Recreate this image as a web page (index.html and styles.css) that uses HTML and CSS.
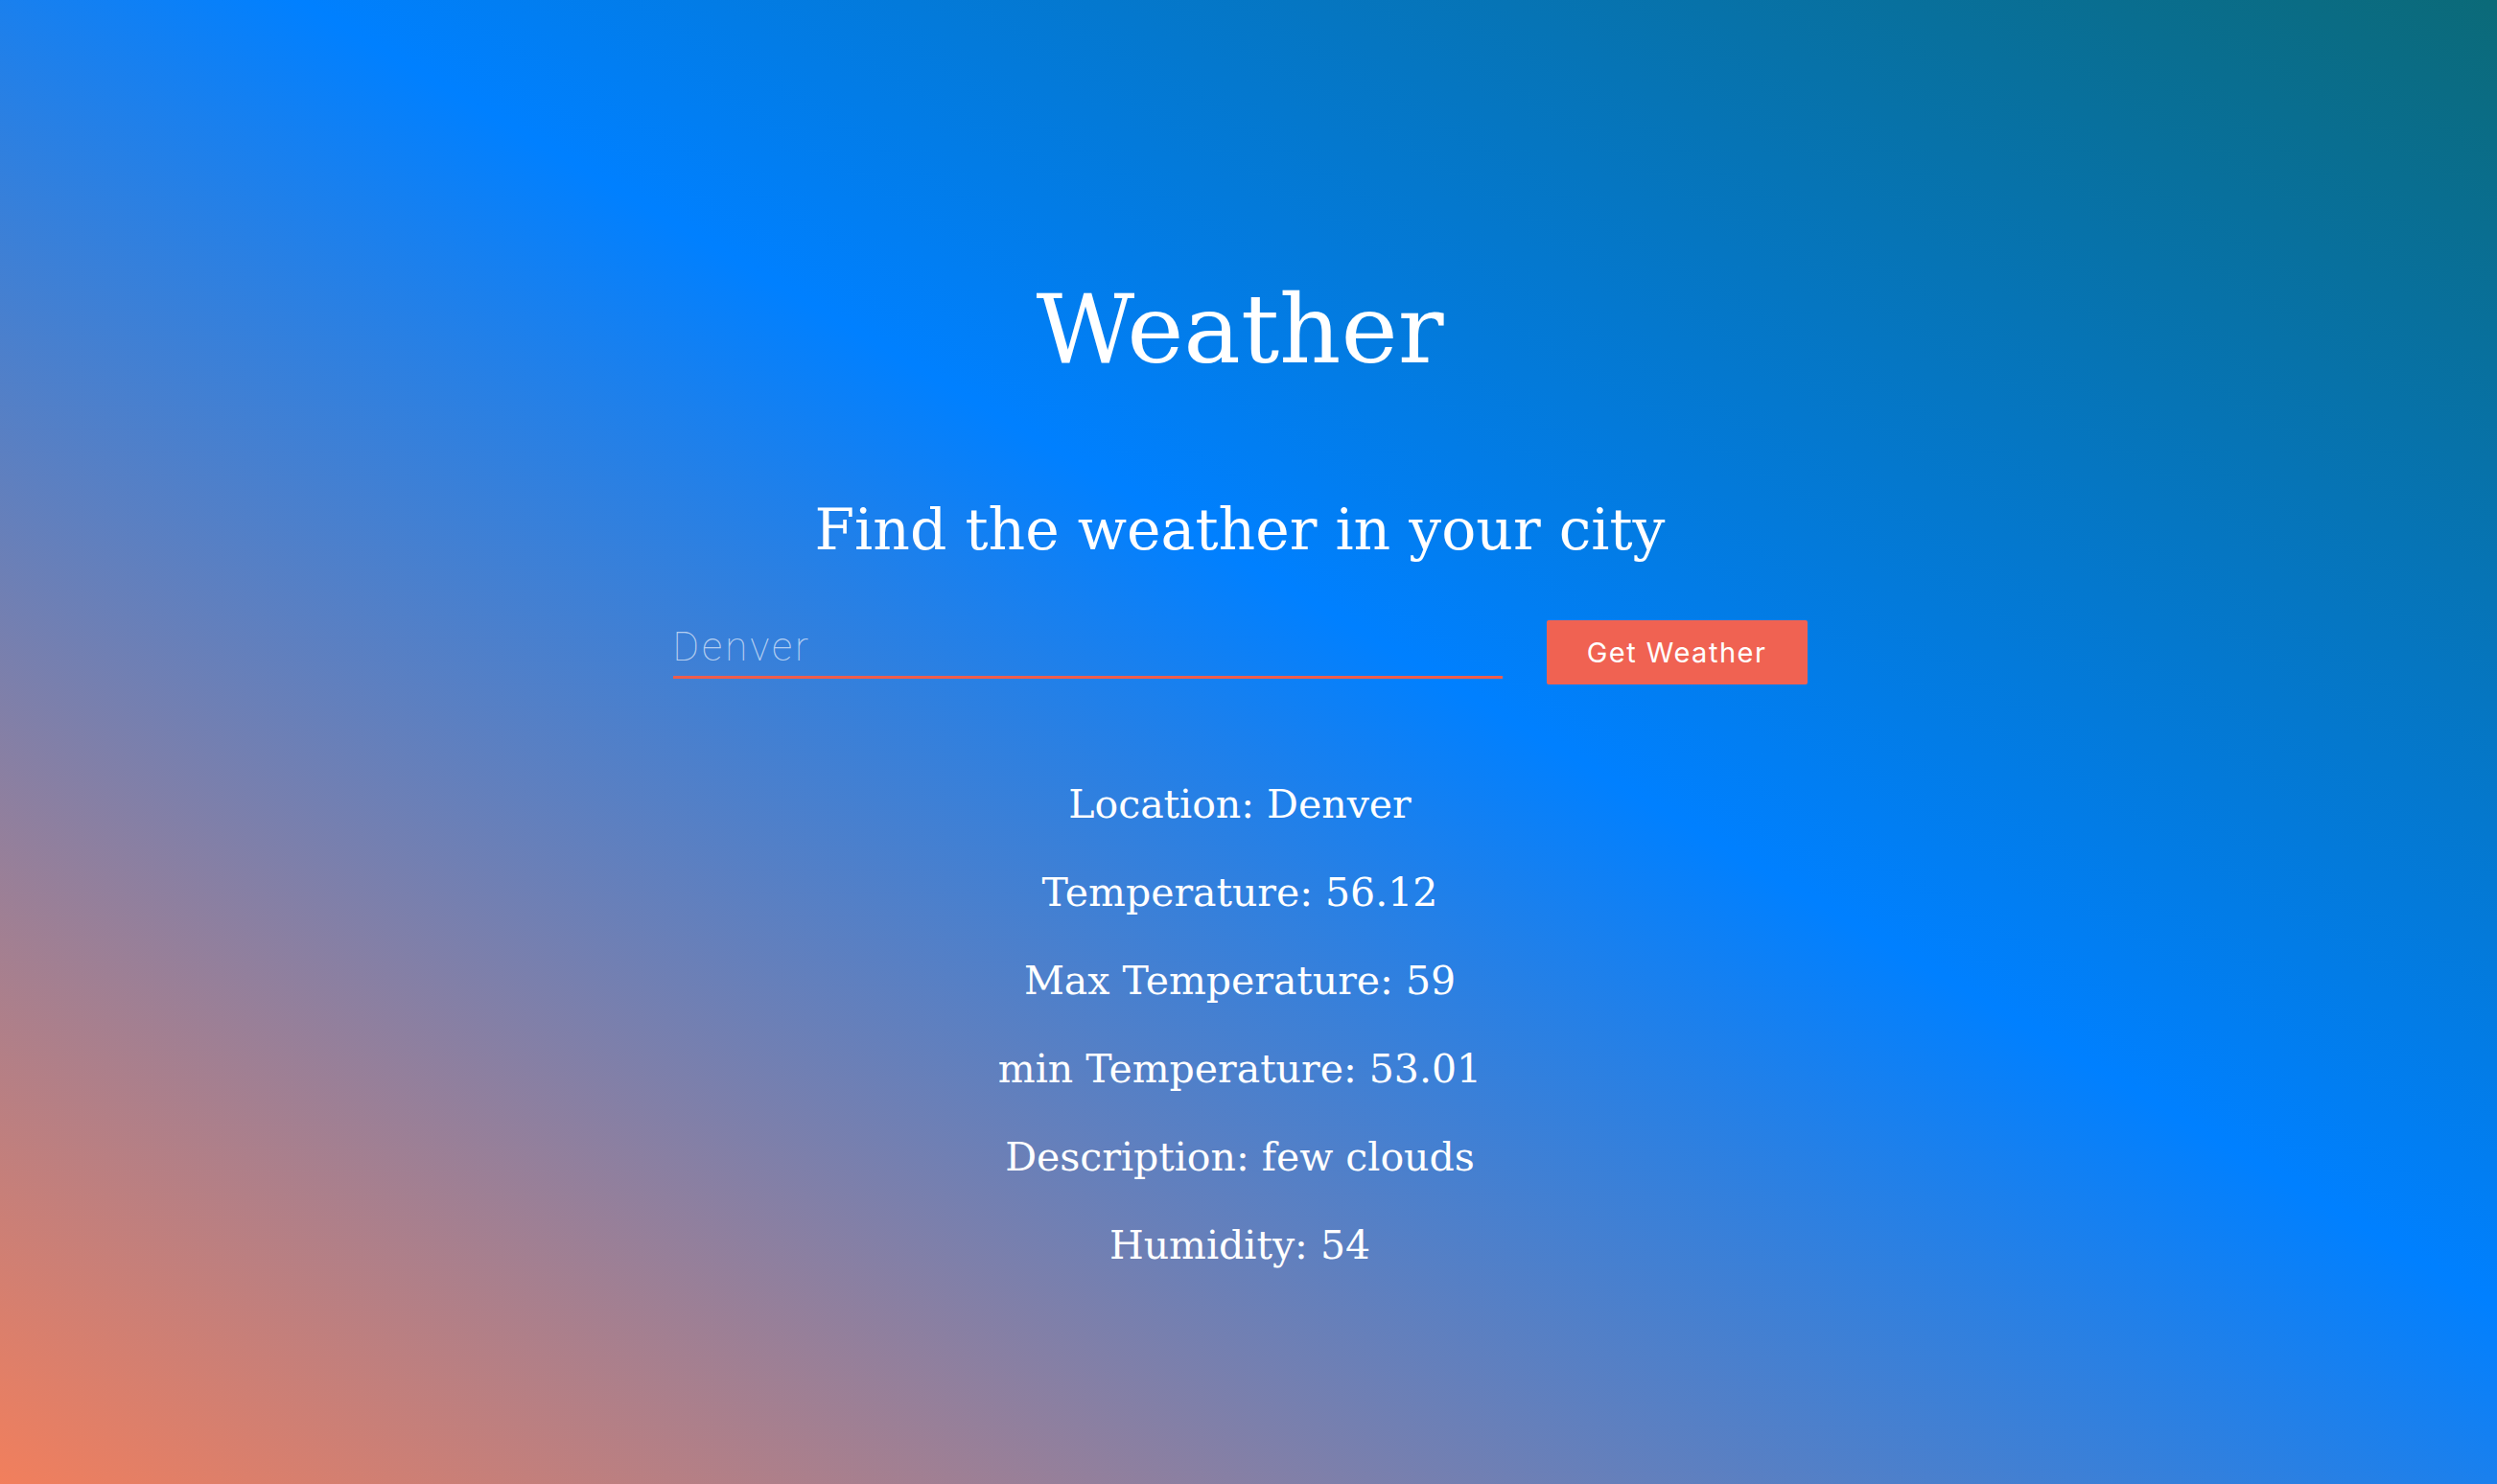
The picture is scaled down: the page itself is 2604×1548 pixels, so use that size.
FILE: index.html
```html
<!DOCTYPE html>
<html lang="en">
<head>
<meta charset="utf-8">
<title>Weather</title>
<link rel="stylesheet" href="styles.css">
</head>
<body>
<main class="app">
  <h1 class="title">Weather</h1>
  <h2 class="subtitle">Find the weather in your city</h2>
  <form class="search">
    <input class="search-input" type="text" placeholder="Denver">
    <button class="search-btn" type="button">Get Weather</button>
  </form>
  <section class="results">
    <p class="result">Location: Denver</p>
    <p class="result">Temperature: 56.12</p>
    <p class="result">Max Temperature: 59</p>
    <p class="result">min Temperature: 53.01</p>
    <p class="result">Description: few clouds</p>
    <p class="result">Humidity: 54</p>
  </section>
</main>
</body>
</html>
```
FILE: styles.css
```css
html, body {
  margin: 0;
  padding: 0;
}
body {
  min-height: 100vh;
  background: linear-gradient(to top right, #f27f5c 0%, #0080ff 56%, #0b6a78 100%);
  color: #fff;
  font-family: "DejaVu Serif", "Liberation Serif", serif;
}
.app {
  display: flex;
  flex-direction: column;
  align-items: center;
  padding: 284px 18px 0 0;
}
.title {
  margin: 0;
  font-size: 100px;
  font-weight: 400;
  line-height: 1.2;
  letter-spacing: 0;
}
.subtitle {
  margin: 112px 0 0;
  font-size: 60px;
  font-weight: 300;
  line-height: 1.2;
  letter-spacing: 0;
}
.search {
  display: flex;
  align-items: flex-end;
  gap: 46px;
  margin-top: 59px;
}
.search-input {
  width: 865px;
  box-sizing: border-box;
  padding: 0 0 6px;
  border: 0;
  border-bottom: 3px solid #ef5d4b;
  background: transparent;
  color: #fff;
  font-family: Roboto, "Noto Sans", sans-serif;
  font-weight: 100;
  font-size: 42px;
  letter-spacing: 3px;
  outline: none;
  margin-bottom: 6px;
}
.search-input::placeholder {
  color: rgba(255, 255, 255, 0.65);
}
.search-btn {
  width: 272px;
  height: 67px;
  border: 0;
  border-radius: 2px;
  background: #f06252;
  color: #fff;
  font-family: Inter, Roboto, sans-serif;
  font-size: 29px;
  letter-spacing: 1.5px;
  cursor: pointer;
}
.results {
  display: flex;
  flex-direction: column;
  align-items: center;
  margin-top: 79px;
}
.result {
  margin: 0;
  font-size: 41px;
  line-height: 92px;
  letter-spacing: 0;
}
```
